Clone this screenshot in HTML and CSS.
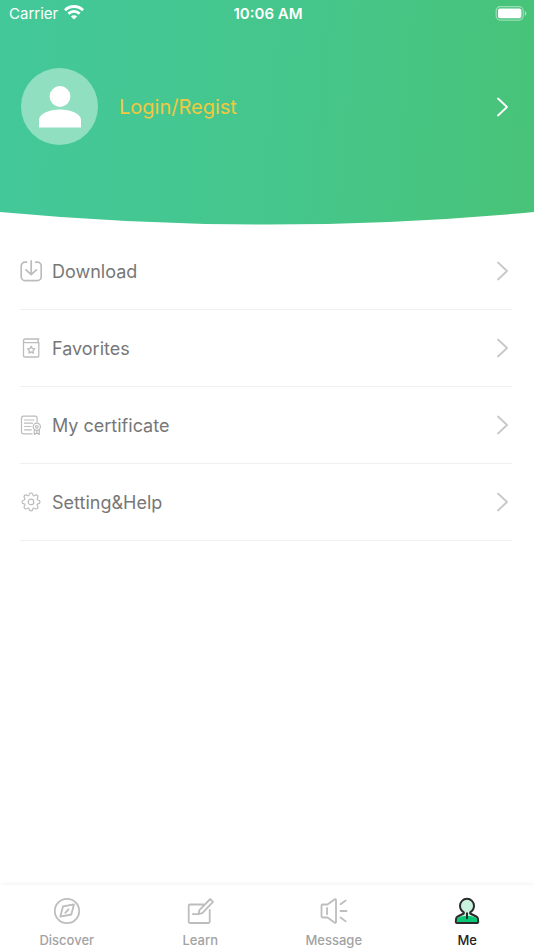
FILE: index.html
```html
<!DOCTYPE html>
<html lang="en">
<head>
<meta charset="utf-8">
<meta name="viewport" content="width=device-width, initial-scale=1">
<title>Me</title>
<link rel="stylesheet" href="styles.css">
</head>
<body>
<header class="hero">
  <div class="status">
    <div class="carrier">
      <span>Carrier</span>
      <svg width="20" height="15" viewBox="0 0 20 15" fill="none" stroke="#fff" stroke-width="2.8" aria-hidden="true">
        <path d="M1 5.2a12.8 12.8 0 0 1 18 0"/>
        <path d="M4.4 8.7a8 8 0 0 1 11.2 0"/>
        <path d="M10 14.6 6.9 11.5a4.4 4.4 0 0 1 6.2 0z" fill="#fff" stroke="none"/>
      </svg>
    </div>
    <time class="clock">10:06 AM</time>
    <svg class="battery" width="32" height="15" viewBox="0 0 32 15" aria-hidden="true">
      <rect x="1.2" y=".7" width="27" height="13.4" rx="4" fill="none" stroke="#fff" stroke-opacity=".45" stroke-width="1.2"/>
      <rect x="3" y="2.6" width="23.4" height="9.6" rx="2" fill="#fff"/>
      <path d="M29.8 5v4.800c1.100-.4 1.600-1.300 1.600-2.400s-.5-2-1.600-2.400z" fill="#fff" fill-opacity=".5"/>
    </svg>
  </div>
  <a class="profile" href="#login">
    <span class="avatar">
      <svg width="42" height="42" viewBox="0 0 42 42" fill="#fff" aria-hidden="true">
        <circle cx="21" cy="10.500" r="10.400"/>
        <path d="M0 41.500V34c0-6 10-10.500 21-10.500S42 28 42 34v7.500z"/>
      </svg>
    </span>
    <span class="login">Login/Regist</span>
    <svg class="chevron" width="12" height="20" viewBox="0 0 12 20" aria-hidden="true"><path d="M2 1.500 11 10l-9 8.500"/></svg>
  </a>
  <svg class="curve" viewBox="0 0 534 13" preserveAspectRatio="none" aria-hidden="true"><path d="M0 0Q267 25 534 0V13H0z" fill="#fff"/></svg>
</header>

<main class="menu">
  <a class="row" href="#download">
    <svg class="icon" width="22" height="22" viewBox="0 0 22 22" stroke-width="1.700" aria-hidden="true">
      <path d="M6.500 2.200H5A3.800 3.800 0 0 0 1.200 6v10.800A3.800 3.800 0 0 0 5 20.600h12.400a3.800 3.800 0 0 0 3.800-3.800V6a3.800 3.800 0 0 0-3.800-3.800h-1.700M11.200.9v13.600M6 9.800l5.200 4.900 5.200-4.900"/>
    </svg>
    <span>Download</span>
    <svg class="chevron" width="12" height="20" viewBox="0 0 12 20" aria-hidden="true"><path d="M2 1.500 11 10l-9 8.500"/></svg>
  </a>
  <a class="row" href="#favorites">
    <svg class="icon" width="22" height="22" viewBox="0 0 22 22" stroke-width="1.300" aria-hidden="true">
      <path d="M18.800 2H5.200a1.800 1.800 0 0 0 0 3.600h13.600V19a1 1 0 0 1-1 1H4.700a1.200 1.200 0 0 1-1.200-1.200V3.800M18.800 2l-1 1.800 1 1.800"/>
      <path d="m11.200 9.200 1.100 2.200 2.500.4-1.800 1.800.4 2.500-2.200-1.200-2.200 1.200.4-2.500-1.800-1.800 2.500-.4z"/>
    </svg>
    <span>Favorites</span>
    <svg class="chevron" width="12" height="20" viewBox="0 0 12 20" aria-hidden="true"><path d="M2 1.500 11 10l-9 8.500"/></svg>
  </a>
  <a class="row" href="#certificate">
    <svg class="icon" width="22" height="22" viewBox="0 0 22 22" stroke-width="1.200" aria-hidden="true">
      <path d="M12 19.800H3.300a1.800 1.800 0 0 1-1.800-1.800V4a1.800 1.800 0 0 1 1.800-1.800h12A1.800 1.800 0 0 1 17.100 4v4M4.500 6h9.500M4.500 9.200h8M4.500 12.500h6.300M4.500 15.800h6.800"/>
      <circle cx="16.800" cy="12.800" r="3.600"/><circle cx="16.800" cy="12.800" r="1.300"/>
      <path d="M14.300 15.800v4.600l2.500-1.300 2.500 1.300v-4.600M16.800 16.500v2.600"/>
    </svg>
    <span>My certificate</span>
    <svg class="chevron" width="12" height="20" viewBox="0 0 12 20" aria-hidden="true"><path d="M2 1.500 11 10l-9 8.500"/></svg>
  </a>
  <a class="row" href="#settings">
    <svg class="icon" width="22" height="22" viewBox="0 0 22 22" stroke-width="1.200" aria-hidden="true">
      <path d="M9.100 3.900C9.300 2.500 10 1.900 11 1.900s1.700.6 1.900 2c.2.800 1 1.100 1.700.7 1.200-.9 2.100-.8 2.800-.1s.8 1.600-.1 2.800c-.4.700-.1 1.500.7 1.700 1.400.2 2 .9 2 1.900s-.6 1.700-2 1.900c-.8.200-1.100 1-.7 1.700.9 1.200.8 2.100.1 2.800s-1.600.8-2.800-.1c-.7-.4-1.500-.1-1.700.7-.2 1.400-.9 2-1.900 2s-1.700-.6-1.900-2c-.2-.8-1-1.100-1.700-.7-1.200.9-2.100.8-2.800.1s-.8-1.600.1-2.800c.4-.7.100-1.500-.7-1.700-1.400-.2-2-.9-2-1.900s.6-1.700 2-1.900c.8-.2 1.100-1 .7-1.700-.9-1.200-.8-2.100-.1-2.800s1.600-.8 2.800.1c.7.400 1.500.1 1.700-.7z"/>
      <circle cx="11" cy="10.900" r="2.800"/>
    </svg>
    <span>Setting&amp;Help</span>
    <svg class="chevron" width="12" height="20" viewBox="0 0 12 20" aria-hidden="true"><path d="M2 1.500 11 10l-9 8.500"/></svg>
  </a>
</main>

<nav class="tabs">
  <a class="tab" href="#discover">
    <svg width="28" height="28" viewBox="0 0 28 28" aria-hidden="true">
      <circle cx="14" cy="14" r="12.200"/>
      <path d="m10 9.300 11-2-2.700 10.200-11 2.200zM12.300 15.800l3.200-3.400"/>
    </svg>
    <span>Discover</span>
  </a>
  <a class="tab" href="#learn">
    <svg width="28" height="28" viewBox="0 0 28 28" aria-hidden="true">
      <path d="M17.500 7.500H3.900a1.200 1.200 0 0 0-1.200 1.200v16.100A1.200 1.200 0 0 0 3.900 26h18.600a1.200 1.200 0 0 0 1.200-1.200V13M6.900 17.200h5.600l3.800-1.100L27 4.800 24.300 2 13.400 13.200l-.9 4"/>
    </svg>
    <span>Learn</span>
  </a>
  <a class="tab" href="#message">
    <svg width="28" height="28" viewBox="0 0 28 28" aria-hidden="true">
      <path d="M7.500 7.500H2.700A1.200 1.200 0 0 0 1.500 8.700v10.600a1.200 1.200 0 0 0 1.200 1.200h4.800l7.300 5.200a.8.800 0 0 0 1.200-.7V3a.8.800 0 0 0-1.200-.7zM7 10.800v6.400M20.500 7.200l5.200-3.600M20.500 14h6M20.500 20.500l5.200 3.900"/>
    </svg>
    <span>Message</span>
  </a>
  <a class="tab active" href="#me" aria-current="page">
    <svg width="28" height="28" viewBox="0 0 28 28" aria-hidden="true">
      <path class="body" d="M10.800 15.300C8.400 13.800 7 11.500 7 8.800a7 7 0 0 1 14 0c0 2.700-1.400 5-3.800 6.500v1.200l6.100 3a2.800 2.800 0 0 1 1.600 2.200l.3 3.200a1 1 0 0 1-1 1.100H3.800a1 1 0 0 1-1-1.100l.3-3.200a2.800 2.800 0 0 1 1.600-2.200l6.100-3z"/>
      <path class="shirt" d="M4.800 20.800q9.200-4.200 18.400 0 1 .8 1.100 2l.2 2.200h-21l.2-2.200q.1-1.200 1.100-2z"/>
      <path class="outline" d="M10.800 15.300C8.400 13.800 7 11.500 7 8.800a7 7 0 0 1 14 0c0 2.700-1.400 5-3.800 6.500v1.200l6.100 3a2.800 2.800 0 0 1 1.600 2.200l.3 3.200a1 1 0 0 1-1 1.100H3.800a1 1 0 0 1-1-1.100l.3-3.200a2.800 2.800 0 0 1 1.600-2.200l6.100-3zM14 16.300v5"/>
    </svg>
    <span>Me</span>
  </a>
</nav>
</body>
</html>
```
FILE: styles.css
```css
* { box-sizing: border-box; }

body {
  margin: 0;
  min-height: 100vh;
  display: flex;
  flex-direction: column;
  background: #fff;
  font-family: Inter, "Liberation Sans", sans-serif;
  color: #777;
}

a { color: inherit; text-decoration: none; }
svg { display: block; flex: none; }

.hero {
  display: flex;
  flex-direction: column;
  background: linear-gradient(95deg, #43c89a, #45c68b 55%, #48c378);
  color: #fff;
}

.status {
  display: grid;
  grid-template-columns: 1fr auto 1fr;
  align-items: center;
  height: 27px;
  padding: 0 7px 0 9px;
  font-size: 15px;
}

.carrier { display: flex; align-items: center; gap: 6px; }
.carrier svg { margin-bottom: 2px; }
.clock { font-weight: 600; }
.battery { justify-self: end; }

.profile {
  display: flex;
  align-items: center;
  gap: 21px;
  padding: 41px 26px 67px 21px;
}

.avatar {
  display: flex;
  align-items: center;
  justify-content: center;
  width: 77px;
  height: 77px;
  border-radius: 50%;
  background: #90dfc0;
}

.login { color: #f2c83f; font-size: 20px; }

.chevron {
  margin-left: auto;
  fill: none;
  stroke: #c8c8c8;
  stroke-width: 1.8;
  stroke-linecap: round;
  stroke-linejoin: round;
}

.profile .chevron { stroke: #fff; }
.curve { width: 100%; height: 13px; }

.menu { flex: 1; padding: 8px 22px 0 20px; }

.row {
  display: flex;
  align-items: center;
  gap: 10px;
  height: 77px;
  padding-right: 4px;
  border-bottom: 1px solid #f0f0f0;
  font-size: 18px;
}

.icon {
  fill: none;
  stroke: #bcbcbc;
  stroke-linecap: round;
  stroke-linejoin: round;
}

.tabs {
  display: grid;
  grid-template-columns: repeat(4, 1fr);
  height: 65px;
  background: #fff;
  box-shadow: 0 -1px 4px rgba(0, 0, 0, 0.06);
}

.tab {
  display: flex;
  flex-direction: column;
  align-items: center;
  gap: 7px;
  padding-top: 12px;
  color: #a3a3a3;
  font-size: 13px;
  font-weight: 500;
  line-height: 16px;
}

.tab svg {
  fill: none;
  stroke: #bdbdbd;
  stroke-width: 1.8;
  stroke-linecap: round;
  stroke-linejoin: round;
}

.active { color: #222; }
.tab .body { fill: #c9f2df; stroke: none; }
.tab .shirt { fill: #08c775; stroke: none; }
.tab .outline { stroke: #2b2b2b; stroke-width: 2; }
```
